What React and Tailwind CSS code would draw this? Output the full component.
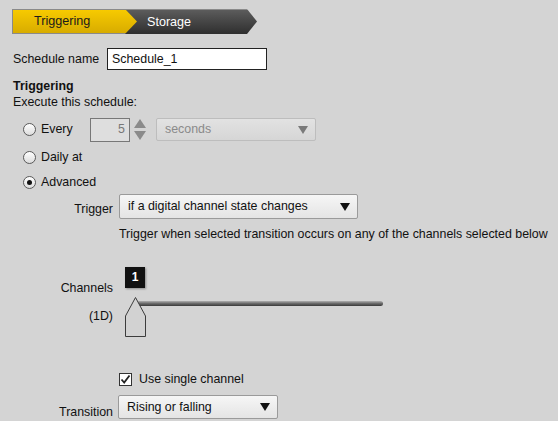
// Programación: pestañas Triggering / Storage y el formulario de disparo.

function Radio({ checked }) {
  return (
    <span className="flex h-[13px] w-[13px] shrink-0 items-center justify-center rounded-full border border-[#5a5a5a] bg-gradient-to-b from-[#ffffff] to-[#dcdcdc]">
      {checked && <span className="h-[5px] w-[5px] rounded-full bg-[#111]" />}
    </span>
  )
}

function Select({ value, width, disabled }) {
  return (
    <div
      className={`flex h-full items-center justify-between rounded-[2px] border pl-[8px] pr-[7px] ${width} ${
        disabled
          ? 'border-[#bdbdbd] bg-gradient-to-b from-[#e2e2e2] to-[#d6d6d6] text-[#8a8a8a]'
          : 'border-[#9a9a9a] bg-gradient-to-b from-[#f6f6f6] to-[#e4e4e4] text-[#111]'
      }`}
    >
      <span>{value}</span>
      <svg width="10" height="8" viewBox="0 0 10 8">
        <path d="M0 0 H10 L5 8 Z" fill={disabled ? '#7a7a7a' : '#111'} />
      </svg>
    </div>
  )
}

export default function App() {
  return (
    <div className="h-[421px] w-[558px] overflow-hidden bg-[#d4d4d4] pt-[9px] font-['Liberation_Sans',Arial,sans-serif] text-[12.4px] leading-[15px] text-[#111]">
      {/* pestañas */}
      <div className="ml-[12px] flex h-[25px] text-[12.6px]">
        <div className="relative z-10 flex w-[125px] items-center border-y border-l border-[#8a8a8a] bg-gradient-to-b from-[#f7ca00] to-[#d8ac00] pl-[21px] text-[#1a1a1a] [clip-path:polygon(0_0,calc(100%-12px)_0,100%_50%,calc(100%-12px)_100%,0_100%)]">
          Triggering
        </div>
        <div className="-ml-[12px] flex w-[132px] items-center border-t border-[#8a8a8a] bg-gradient-to-b from-[#5c5c5c] to-[#2f2f2f] pl-[22px] text-white [clip-path:polygon(0_0,calc(100%-10px)_0,100%_50%,calc(100%-10px)_100%,0_100%)]">
          Storage
        </div>
      </div>

      {/* nombre */}
      <div className="mt-[14px] flex h-[22px] items-center pl-[13px]">
        <span className="w-[94px]">Schedule name</span>
        <div className="flex h-full w-[160px] items-center border border-[#222] bg-white pl-[4px]">Schedule_1</div>
      </div>

      <p className="mt-[9px] pl-[13px] font-bold">Triggering</p>
      <p className="mt-[1px] pl-[13px]">Execute this schedule:</p>

      {/* Every */}
      <div className="mt-[8px] flex h-[23px] items-center pl-[23px]">
        <div className="flex w-[67px] items-center gap-[5px]">
          <Radio />
          <span>Every</span>
        </div>
        <div className="flex h-[24px] w-[40px] items-center justify-end border border-[#777] bg-[#dedede] pr-[4px] text-[#777]">5</div>
        <div className="ml-[2px] flex h-[23px] w-[16px] flex-col items-center justify-center gap-[3px]">
          <svg width="12" height="9" viewBox="0 0 12 9">
            <path d="M0 9 L6 0 L12 9 Z" fill="#8a8a8a" />
          </svg>
          <svg width="12" height="9" viewBox="0 0 12 9">
            <path d="M0 0 H12 L6 9 Z" fill="#8a8a8a" />
          </svg>
        </div>
        <div className="ml-[8px] h-[23px]">
          <Select value="seconds" width="w-[160px]" disabled />
        </div>
      </div>

      <div className="mt-[5px] flex h-[23px] items-center gap-[5px] pl-[23px]">
        <Radio />
        <span>Daily at</span>
      </div>
      <div className="mt-[2px] flex h-[22px] items-center gap-[5px] pl-[23px]">
        <Radio checked />
        <span>Advanced</span>
      </div>

      {/* Trigger */}
      <div className="mt-[1px] flex h-[25px]">
        <span className="w-[113px] self-end pb-[2px] text-right">Trigger</span>
        <div className="ml-[6px] h-full">
          <Select value="if a digital channel state changes" width="w-[239px]" />
        </div>
      </div>
      <p className="mt-[8px] whitespace-nowrap pl-[119px]">
        Trigger when selected transition occurs on any of the channels selected below
      </p>

      {/* canales */}
      <div className="mt-[25px] flex">
        <div className="w-[113px] text-right">
          <p className="pt-[14px]">Channels</p>
          <p className="mt-[13px]">(1D)</p>
        </div>
        <div className="relative ml-[12px] h-[70px] w-[260px]">
          <div className="absolute left-[12px] top-[34px] h-[5px] w-[246px] rounded-full bg-gradient-to-b from-[#b0b0b0] via-[#6a6a6a] to-[#3a3a3a]" />
          <div className="absolute left-0 top-0 flex h-[21px] w-[20px] items-center justify-center bg-[#111] text-[12px] font-bold text-white shadow-[1px_1px_2px_rgba(0,0,0,0.35)]">
            1
          </div>
          <svg className="absolute left-0 top-[30px]" width="21" height="40" viewBox="0 0 21 40">
            <path d="M10.5 0.5 L20.5 19 V39.5 H0.5 V19 Z" fill="#d2d2d2" stroke="#3c3c3c" strokeWidth="1" />
          </svg>
        </div>
      </div>

      {/* casilla */}
      <div className="mt-[35px] flex h-[15px] items-center pl-[119px]">
        <span className="flex h-[13px] w-[13px] items-center justify-center border border-[#333] bg-white">
          <svg width="11" height="11" viewBox="0 0 11 11">
            <path d="M1.5 5.5 L4.2 8.5 L9.5 1.5" fill="none" stroke="#222" strokeWidth="1.8" />
          </svg>
        </span>
        <span className="ml-[7px]">Use single channel</span>
      </div>

      {/* Transition */}
      <div className="mt-[8px] flex h-[24px]">
        <span className="w-[113px] self-end text-right leading-[14px]">Transition</span>
        <div className="ml-[5px] h-full">
          <Select value="Rising or falling" width="w-[160px]" />
        </div>
      </div>
    </div>
  )
}
